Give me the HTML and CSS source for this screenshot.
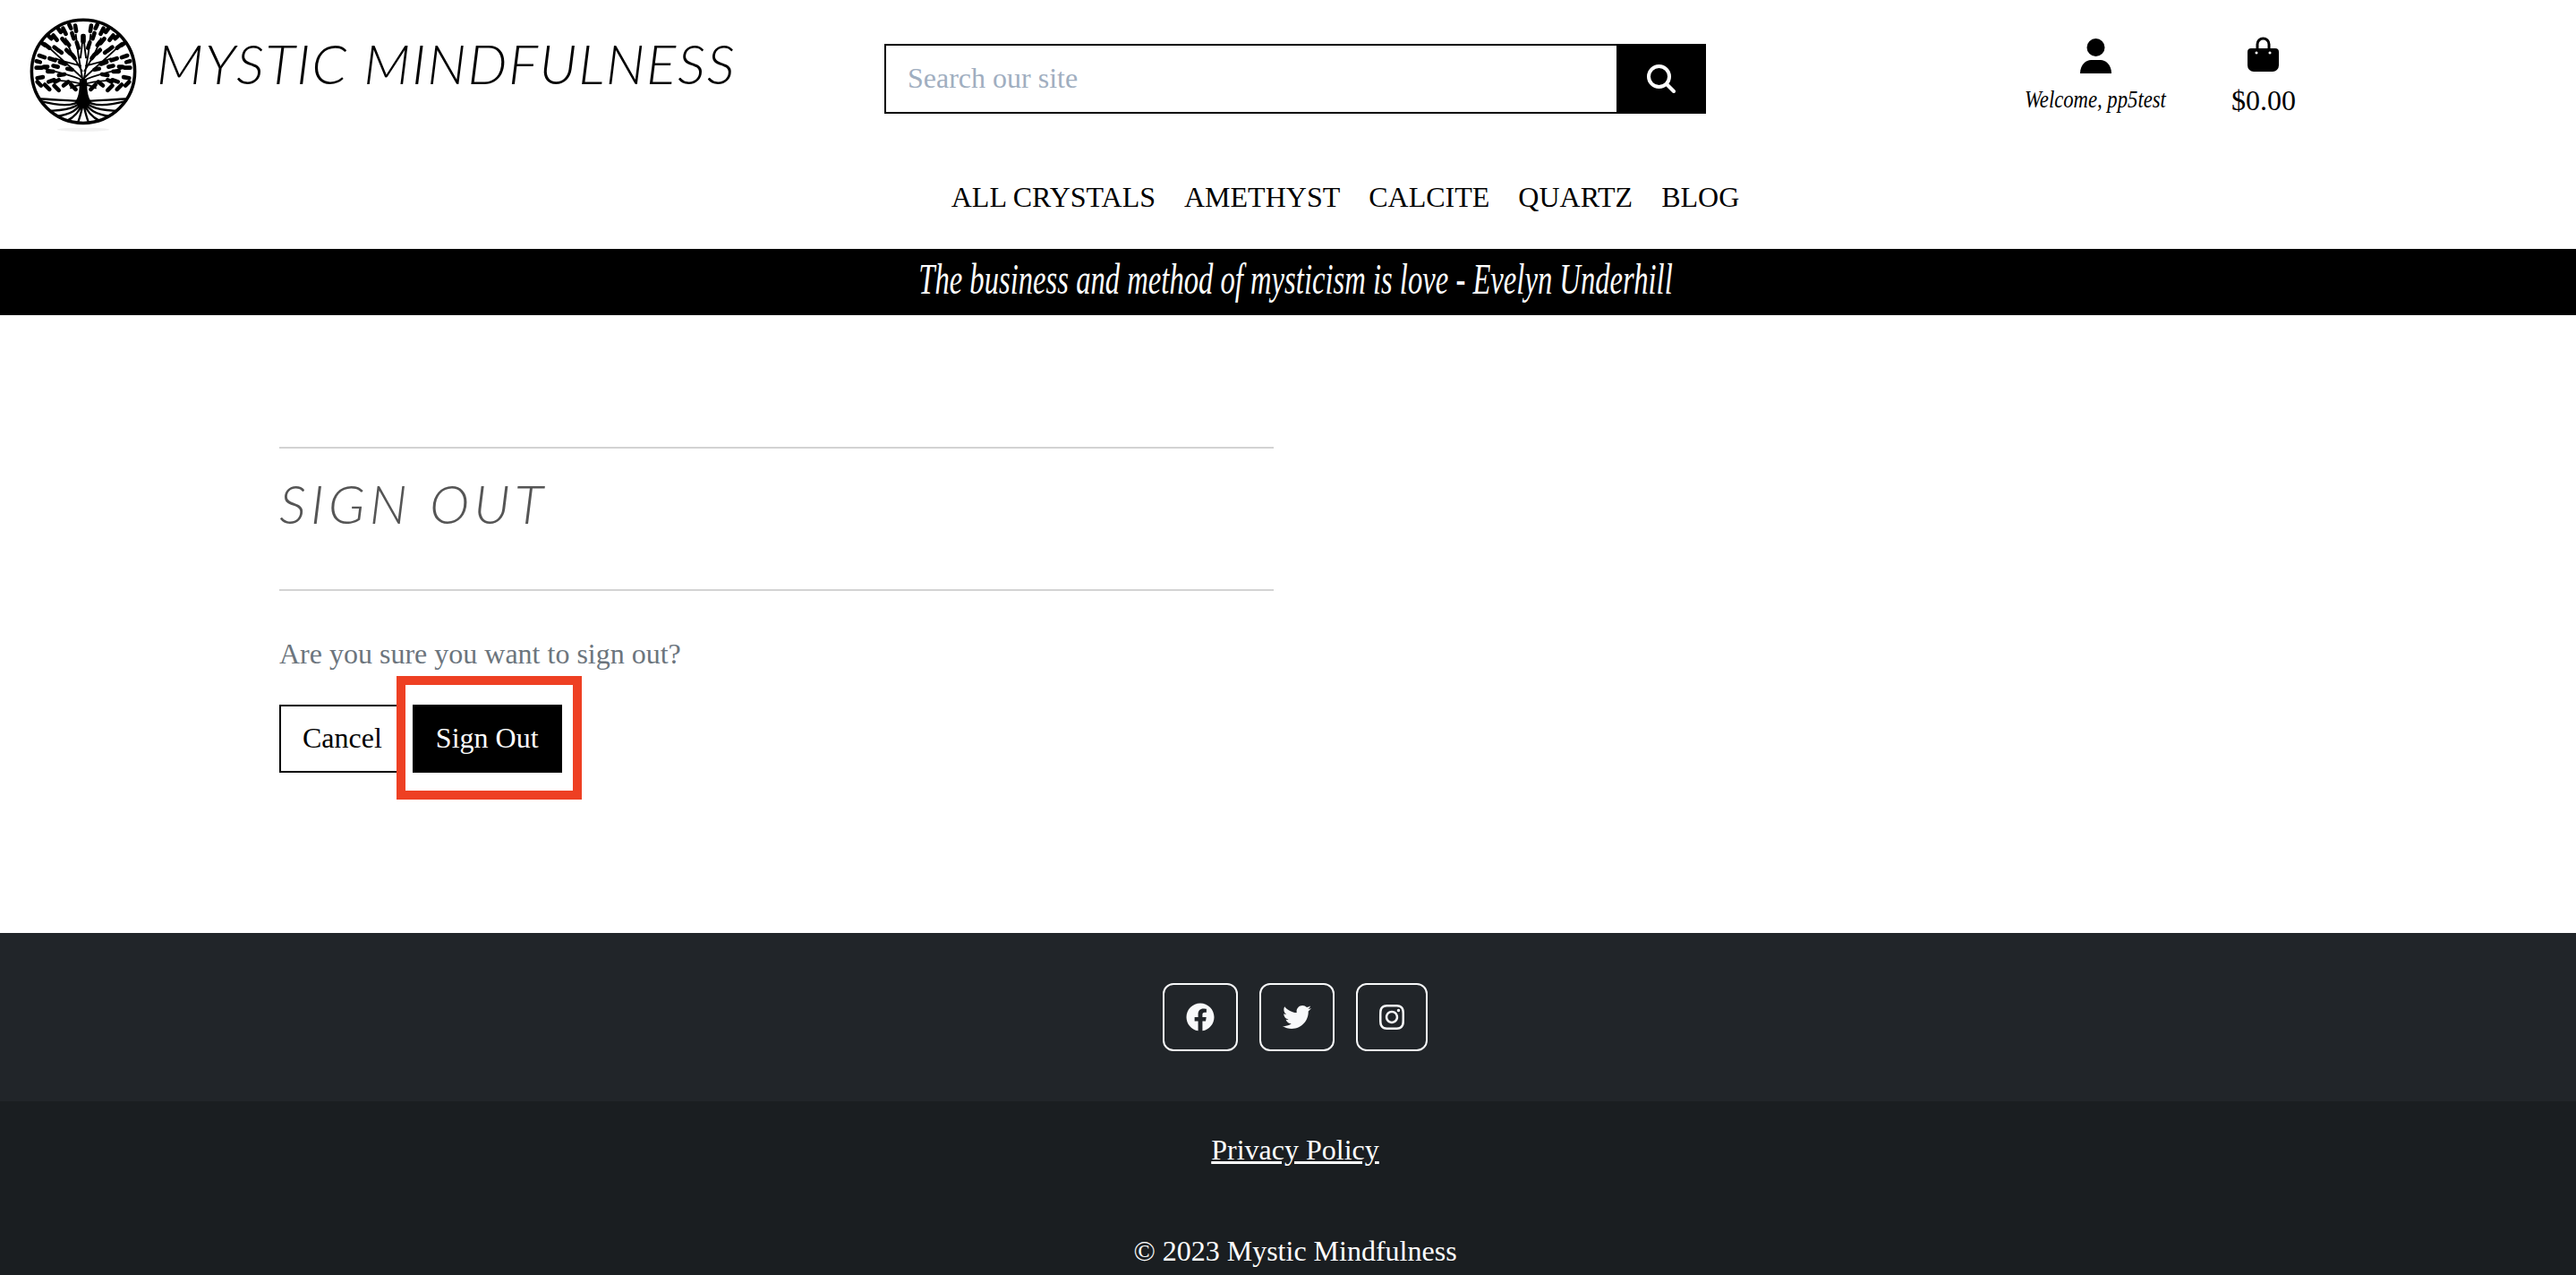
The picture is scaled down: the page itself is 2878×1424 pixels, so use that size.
FILE: index.html
```html
<!DOCTYPE html>
<html lang="en">
<head>
<meta charset="utf-8">
<title>Mystic Mindfulness</title>
<link rel="stylesheet" href="styles.css">
</head>
<body>
<header class="site-header">
  <div class="top-row">
    <a class="brand" href="#">
      <svg class="logo-mark" viewBox="-60 -60 120 126" aria-hidden="true">
        <defs>
          <clipPath id="disc"><circle r="54"/></clipPath>
          <g id="half">
            <path class="leaves" d="M7.5 -43l1 -6M18.5 -40l3 -6M28 -33.5l4 -5M36 -25l5 -4M41 -15l6 -2M44 -4l6 0M43 6l6 1M0.5 -38l0 6M10 -35l2 -6M18.5 -30l4 -5M26 -22l5 -4M30 -12l6 -2M32 0l6 0M31 9l6 2M5 -25l2 -6M14 -19l4 -4M19 -8l6 -2M20 3l6 1M16 11l5 4M8 19l5 -5M26 20l5 -5M36 19l5 -5M45 15l4 -4M13 -46l2 -4M24 -42l3 -4M34 -35l3 -3M41 -28l4 -3M46 -10l4 -1M15 -28l3 -4M23 -20l4 -3M27 -5l5 -1M26 9l4 2M9 -14l3 -4M12 -2l5 -1M38 -5l4 0"/>
            <path class="branches" d="M0 12C2 0 5 -10 8 -40M0 8C8 0 20 -10 36 -25M0 10C10 4 25 2 44 -4M0 14C10 10 22 10 34 9M1 0C8 -12 15 -22 19 -36M0 14C6 14 10 16 14 18M2 -6C10 -8 20 -10 30 -14M3 -14C2 -22 1 -28 1 -34"/>
            <path class="roots" d="M1 30C8 36 20 38 44 32M1 32C8 38 16 42 40 42M1 33C6 40 12 46 30 48M1 34C4 42 8 48 18 53M0 34C2 42 3 48 6 55M4 31C14 32 26 30 50 29"/>
            <path class="trunk" d="M0 8L4 8C4 18 4 26 9 33L0 38z"/>
          </g>
        </defs>
        <circle class="ring" r="55"/>
        <g clip-path="url(#disc)">
          <use href="#half"/>
          <use href="#half" transform="scale(-1 1)"/>
        </g>
        <ellipse class="logo-shadow" cx="0" cy="62" rx="28" ry="2"/>
      </svg>
      <span class="brand-name">MYSTIC MINDFULNESS</span>
    </a>
    <form class="search">
      <input class="search-input" type="text" placeholder="Search our site">
      <button class="search-btn" type="button" aria-label="Search">
        <svg class="search-icon" viewBox="0 0 32 32"><circle cx="13.5" cy="13.5" r="11.5"/><path d="M22 22L30 30"/></svg>
      </button>
    </form>
    <div class="account">
      <a class="account-item user" href="#">
        <svg class="user-icon" viewBox="0 0 35 39"><circle cx="17.5" cy="10" r="10"/><path d="M0 39C0 29 7 24 12 24H23C28 24 35 29 35 39z"/></svg>
        <span class="welcome"><span class="welcome-text">Welcome, pp5test</span></span>
      </a>
      <a class="account-item cart" href="#">
        <svg class="bag-icon" viewBox="0 0 35 39"><path fill-rule="evenodd" d="M9.5 13V8.5a8 8 0 0 1 16 0V13H31a4 4 0 0 1 4 4v15a7 7 0 0 1-7 7H7a7 7 0 0 1-7-7V17a4 4 0 0 1 4-4zM12.5 13h10V8.5a5 5 0 0 0-10 0zM10 16.5a1.5 1.5 0 1 0 .01 0zM25 16.5a1.5 1.5 0 1 0 .01 0z"/></svg>
        <span class="price">$0.00</span>
      </a>
    </div>
  </div>
  <nav class="main-nav">
    <a href="#">ALL CRYSTALS</a>
    <a href="#">AMETHYST</a>
    <a href="#">CALCITE</a>
    <a href="#">QUARTZ</a>
    <a href="#">BLOG</a>
  </nav>
  <div class="banner"><span class="banner-text">The business and method of mysticism is love - Evelyn Underhill</span></div>
</header>

<main class="content">
  <section class="panel">
    <hr class="rule">
    <h1 class="page-title">SIGN OUT</h1>
    <hr class="rule">
    <p class="question">Are you sure you want to sign out?</p>
    <div class="actions">
      <a class="btn btn-outline" href="#">Cancel</a>
      <span class="signout-wrap">
        <a class="btn btn-solid" href="#">Sign Out</a>
        <span class="highlight"></span>
      </span>
    </div>
  </section>
</main>

<footer class="footer">
  <div class="social">
    <a class="social-btn" href="#" aria-label="Facebook">
      <svg class="social-icon" viewBox="0 0 512 512"><path d="M504 256C504 119 393 8 256 8S8 119 8 256c0 123.78 90.69 226.38 209.25 245V327.69h-63V256h63v-54.64c0-62.15 37-96.48 93.67-96.48 27.14 0 55.52 4.84 55.52 4.84v61h-31.28c-30.8 0-40.41 19.12-40.41 38.73V256h68.78l-11 71.69h-57.78V501C413.31 482.38 504 379.78 504 256z"/></svg>
    </a>
    <a class="social-btn" href="#" aria-label="Twitter">
      <svg class="social-icon" viewBox="0 0 512 512"><path d="M459.37 151.716c.325 4.548.325 9.097.325 13.645 0 138.72-105.583 298.558-298.558 298.558-59.452 0-114.68-17.219-161.137-47.106 8.447.974 16.568 1.299 25.34 1.299 49.055 0 94.213-16.568 130.274-44.832-46.132-.975-84.792-31.188-98.112-72.772 6.498.974 12.995 1.624 19.818 1.624 9.421 0 18.843-1.3 27.614-3.573-48.081-9.747-84.143-51.98-84.143-102.985v-1.299c13.969 7.797 30.214 12.67 47.431 13.319-28.264-18.843-46.781-51.005-46.781-87.391 0-19.492 5.197-37.36 14.294-52.954 51.655 63.675 129.3 105.258 216.365 109.807-1.624-7.797-2.599-15.918-2.599-24.04 0-57.828 46.782-104.934 104.934-104.934 30.213 0 57.502 12.67 76.67 33.137 23.715-4.548 46.456-13.32 66.599-25.34-7.798 24.366-24.366 44.833-46.132 57.827 21.117-2.273 41.584-8.122 60.426-16.243-14.292 20.791-32.161 39.308-52.628 54.253z"/></svg>
    </a>
    <a class="social-btn social-btn-narrow" href="#" aria-label="Instagram">
      <svg class="social-icon" viewBox="0 0 448 512"><path d="M224.1 141c-63.6 0-114.9 51.3-114.9 114.9s51.3 114.9 114.9 114.9S339 319.5 339 255.9 287.7 141 224.1 141zm0 189.6c-41.1 0-74.7-33.5-74.7-74.7s33.5-74.7 74.7-74.7 74.7 33.5 74.7 74.7-33.6 74.7-74.7 74.7zm146.4-194.3c0 14.9-12 26.8-26.8 26.8-14.9 0-26.8-12-26.8-26.8s12-26.8 26.8-26.8 26.8 12 26.8 26.8zm76.1 27.2c-1.7-35.9-9.9-67.7-36.2-93.9-26.2-26.2-58-34.4-93.9-36.2-37-2.1-147.9-2.1-184.9 0-35.8 1.7-67.6 9.9-93.9 36.1s-34.4 58-36.2 93.9c-2.1 37-2.1 147.9 0 184.9 1.7 35.9 9.9 67.7 36.2 93.9s58 34.4 93.9 36.2c37 2.1 147.9 2.1 184.9 0 35.9-1.7 67.7-9.9 93.9-36.2 26.2-26.2 34.4-58 36.2-93.9 2.1-37 2.1-147.8 0-184.8zM398.8 388c-7.8 19.6-22.9 34.7-42.6 42.6-29.5 11.7-99.5 9-132.1 9s-102.7 2.6-132.1-9c-19.6-7.8-34.7-22.9-42.6-42.6-11.7-29.5-9-99.5-9-132.1s-2.6-102.7 9-132.1c7.8-19.6 22.9-34.7 42.6-42.6 29.5-11.7 99.5-9 132.1-9s102.7-2.6 132.1 9c19.6 7.8 34.7 22.9 42.6 42.6 11.7 29.5 9 99.5 9 132.1s2.7 102.7-9 132.1z"/></svg>
    </a>
  </div>
  <div class="legal">
    <a class="privacy" href="#">Privacy Policy</a>
    <p class="copyright">© 2023 Mystic Mindfulness</p>
  </div>
</footer>
</body>
</html>
```

FILE: styles.css
```css
* { box-sizing: border-box; }
html, body { margin: 0; padding: 0; }
body {
  height: 1424px;
  overflow: hidden;
  background: #fff;
  color: #000;
  font-family: "Liberation Serif", "Times New Roman", serif;
  font-size: 32px;
  line-height: 37px;
}
a { color: inherit; text-decoration: none; }

/* header */
.top-row {
  display: grid;
  grid-template-columns: 988px 918px 1fr;
  height: 190px;
}
.brand { display: flex; align-items: flex-start; padding: 17px 0 0 30px; }
.logo-mark { width: 126px; height: 132px; flex: none; }
.ring { fill: none; stroke: #000; stroke-width: 3.4; }
.leaves { fill: none; stroke: #000; stroke-width: 4.4; stroke-linecap: round; }
.branches { fill: none; stroke: #000; stroke-width: 1.8; }
.roots { fill: none; stroke: #000; stroke-width: 2.2; }
.trunk { fill: #000; }
.logo-shadow { fill: #f1f1f1; }
.brand-name {
  margin: 18px 0 0 19px;
  font-family: "Lato", sans-serif;
  font-style: italic;
  font-weight: 300;
  font-size: 62px;
  line-height: 70px;
  letter-spacing: 1.7px;
  white-space: nowrap;
}
.search { display: flex; height: 78px; margin-top: 49px; }
.search-input {
  flex: 1;
  min-width: 0;
  height: 100%;
  border: 2px solid #000;
  border-right: 0;
  padding: 0 24px 2px;
  font: inherit;
  border-radius: 0;
  background: #fff;
  outline: none;
}
.search-input::placeholder { color: #a0aec0; opacity: 1; }
.search-btn {
  display: flex;
  align-items: center;
  justify-content: center;
  width: 100px;
  height: 100%;
  padding: 0;
  border: 0;
  background: #000;
}
.search-icon { width: 32px; height: 32px; fill: none; stroke: #fff; stroke-width: 4; stroke-linecap: round; }

.account { display: flex; align-items: flex-start; padding: 40px 0 0 356px; gap: 73px; }
.account-item { display: flex; flex-direction: column; align-items: center; }
.user-icon { width: 35px; height: 39px; margin-top: 3px; }
.bag-icon { width: 35px; height: 39px; margin-top: 1px; }
.welcome { display: block; width: 158px; margin-top: 10px; height: 37px; }
.welcome-text {
  display: block;
  width: 210px;
  font-style: italic;
  font-size: 28px;
  line-height: 37px;
  white-space: nowrap;
  transform: scaleX(0.81);
  transform-origin: left center;
}
.price { width: 70px; margin-top: 14px; white-space: nowrap; }

.main-nav {
  display: flex;
  justify-content: center;
  gap: 32px;
  padding: 12px 0 39px 128px;
}
.banner {
  display: flex;
  justify-content: center;
  height: 74px;
  padding-left: 16px;
  background: #000;
  color: #fff;
  overflow: hidden;
}
.banner-text {
  font-style: italic;
  font-size: 48px;
  line-height: 68px;
  white-space: nowrap;
  transform: scaleX(0.68);
}

/* main */
.content { height: 690px; padding: 147px 0 0 312px; }
.panel { width: 1111px; }
.rule { margin: 0; height: 2px; border: 0; background: #d3d3d3; }
.page-title {
  height: 157px;
  margin: 0;
  padding-top: 26px;
  font-family: "Lato", sans-serif;
  font-style: italic;
  font-weight: 300;
  font-size: 60px;
  line-height: 70px;
  letter-spacing: 5px;
  color: #555;
}
.question { margin: 52px 0 38px; color: #6c757d; }
.actions { display: flex; gap: 8px; }
.signout-wrap { position: relative; display: block; }
.btn {
  display: block;
  padding: 17px 24px 19px;
  border: 2px solid #000;
  line-height: 36px;
  white-space: nowrap;
}
.btn-outline { background: #fff; color: #000; }
.btn-solid { background: #000; color: #fff; }
.highlight {
  position: absolute;
  top: -32px;
  left: -18px;
  right: -22px;
  bottom: -30px;
  border: 10px solid #ee4023;
  pointer-events: none;
}

/* footer */
.footer { color: #fff; }
.social {
  display: flex;
  justify-content: center;
  gap: 24px;
  height: 188px;
  padding: 56px 0 56px 16px;
  background: #212529;
}
.social-btn {
  display: flex;
  align-items: center;
  justify-content: center;
  width: 84px;
  height: 76px;
  border: 2px solid #f8f9fa;
  border-radius: 12px;
}
.social-btn-narrow { width: 80px; }
.social-icon { width: 32px; height: 32px; fill: #f8f9fa; }
.legal {
  height: 194px;
  padding: 36px 0 0 16px;
  text-align: center;
  background: #1a1e21;
}
.privacy { text-decoration: underline; }
.copyright { margin: 76px 0 0; }
```
